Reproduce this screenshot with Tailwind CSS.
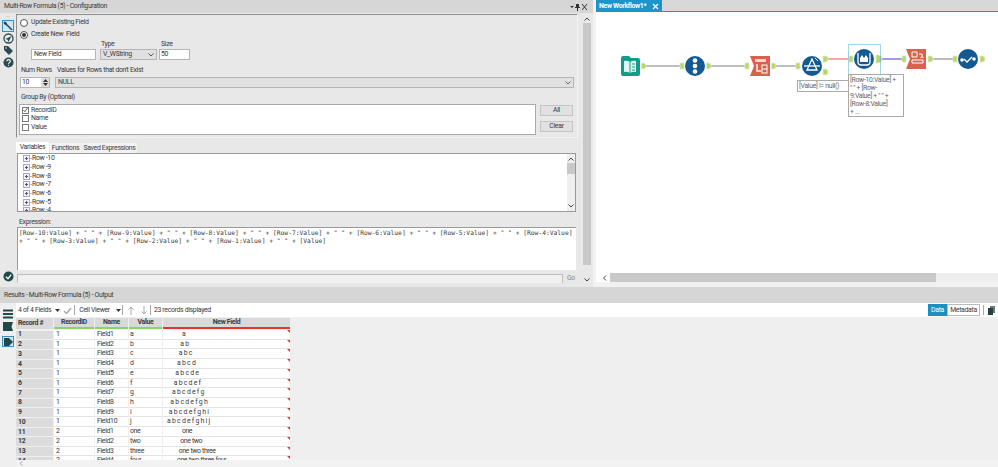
<!DOCTYPE html>
<html lang="en">
<head>
<meta charset="UTF-8" />
<title>Multi-Row Formula</title>
<script src="https://cdn.jsdelivr.net/npm/@tailwindcss/browser@4"></script>
</head>
<body class="bg-[#efefef] text-[#3a3a3a]">
<div class="w-[998px] h-[467px] overflow-hidden flex flex-col font-['Roboto',sans-serif] text-[6.900px] tracking-[-0.32px] leading-none whitespace-nowrap">

  <!-- top: config + canvas -->
  <div class="flex h-[287px] shrink-0">
    <div class="w-[593px] flex flex-col bg-[#e8e8e8]">
      <div class="h-[13px] bg-[#d6d6d6] flex items-center pl-[4px] pr-[4px]">
        <span class="flex-1">Multi-Row Formula (5) - Configuration</span>
        <svg width="18" height="8" viewBox="0 0 18 8" class="mr-[1px]"><path d="M0 3h4l-2 2z" fill="#333"/><path d="M6 1h3v3h1v1H8v3H7V5H5V4h1z" fill="#333"/><path d="M12 1l5 6M17 1l-5 6" stroke="#333" stroke-width="1"/></svg>
      </div>
      <div class="flex flex-1 min-h-0">
        <!-- tool strip -->
        <div class="w-[16px] flex flex-col items-center justify-between pb-[5px]">
          <div class="flex flex-col items-center">
            <div class="h-[7px] text-[5px] text-[#999] leading-[5px]">....</div>
            <div class="w-[12px] h-[12px] bg-[#cfe6f3] border border-[#3a8fc0] flex items-center justify-center">
              <svg width="10" height="10" viewBox="0 0 10 10"><path d="M1 1l2 .5 1 2L9 8.500 8.500 9 3.500 4 1.500 3z" fill="#22434f" stroke="#22434f"/></svg>
            </div>
            <svg class="mt-[1px]" width="11" height="11" viewBox="0 0 11 11"><circle cx="5.500" cy="5.500" r="4.500" fill="none" stroke="#2b4b52" stroke-width="1.300"/><path d="M2.500 6l6-3-3 6-.8-2.200z" fill="#2b4b52"/></svg>
            <svg class="mt-[1px]" width="11" height="11" viewBox="0 0 11 11"><path d="M1 1h4l5 5-4 4-5-5z" fill="#2b4b52"/><circle cx="3" cy="3" r=".8" fill="#e8e8e8"/></svg>
            <svg class="mt-[1px]" width="11" height="11" viewBox="0 0 11 11"><circle cx="5.500" cy="5.500" r="5" fill="#2b4b52"/><path d="M3.800 4.300c0-2.200 3.500-2.200 3.500 0 0 1.300-1.800 1.300-1.800 2.500M5.500 7.800v1" fill="none" stroke="#fff" stroke-width="1.100"/></svg>
          </div>
          <svg width="11" height="11" viewBox="0 0 11 11"><circle cx="5.500" cy="5.500" r="5" fill="#1f4a48"/><path d="M3 5.700l2 2 3.200-4" fill="none" stroke="#fff" stroke-width="1.300"/></svg>
        </div>

        <!-- form column -->
        <div class="w-[567px] flex flex-col">
          <div class="mt-[1px] h-[124px] w-[562px] box-border border-l border-t border-l-[#8e8e8e] border-t-[#8e8e8e] border-r border-b border-r-[#f2f2f2] border-b-[#f2f2f2] flex flex-col">
            <div class="mt-[2px] h-[11px] pl-[3px] flex items-center gap-[2px]"><span class="w-[8px] h-[8px] rounded-full border border-[#555] bg-white"></span><span class="ml-[1px]">Update Existing Field</span></div>
            <div class="mt-[1px] h-[11px] pl-[3px] flex items-center gap-[2px]"><span class="w-[8px] h-[8px] rounded-full border border-[#555] bg-white flex items-center justify-center"><span class="w-[4px] h-[4px] rounded-full bg-[#333]"></span></span><span class="ml-[1px]">Create New&nbsp; Field</span></div>
            <div class="h-[9px] flex items-center"><span class="ml-[84px] w-[60px]">Type</span><span>Size</span></div>
            <div class="flex h-[11px] ml-[14px]">
              <div class="w-[65px] bg-white border border-[#b5b5b5] pl-[2px] flex items-center">New Field</div>
              <div class="ml-[4px] w-[57px] bg-[#e0e0e0] border border-[#b5b5b5] pl-[2px] flex items-center justify-between pr-[2px]">V_WString<svg width="6" height="4" viewBox="0 0 6 4"><path d="M.5 .5L3 3l2.500-2.500" fill="none" stroke="#555"/></svg></div>
              <div class="ml-[2px] w-[31px] bg-white border border-[#b5b5b5] pl-[1px] flex items-center">50</div>
            </div>
            <div class="mt-[5px] h-[10px] flex items-center"><span class="ml-[4px] w-[36px]">Num Rows</span><span>Values for Rows that don't Exist</span></div>
            <div class="mt-[2px] h-[11px] flex">
              <div class="ml-[3px] w-[30px] bg-white border border-[#b5b5b5] pl-[1px] flex items-center justify-between">10<span class="w-[8px] h-full bg-[#ddd] flex flex-col items-center justify-center gap-[1px]"><svg width="5" height="3" viewBox="0 0 5 3"><path d="M0 3h5L2.500 0z" fill="#333"/></svg><svg width="5" height="3" viewBox="0 0 5 3"><path d="M0 0h5L2.500 3z" fill="#333"/></svg></span></div>
              <div class="ml-[5px] w-[519px] bg-[#e0e0e0] border border-[#b5b5b5] pl-[2px] pr-[2px] flex items-center justify-between">NULL<svg width="6" height="4" viewBox="0 0 6 4"><path d="M.5 .5L3 3l2.500-2.500" fill="none" stroke="#666"/></svg></div>
            </div>
            <div class="mt-[4px] h-[10px] pl-[4px] flex items-center">Group By (Optional)</div>
            <div class="mt-[2px] flex">
              <div class="ml-[2px] w-[517px] h-[31px] bg-white border border-[#a9a9a9] pl-[2px] pt-[1px] flex flex-col">
                <div class="h-[8.500px] flex items-center gap-[2px]"><span class="w-[7px] h-[7px] border border-[#777] flex items-center justify-center"><svg width="6" height="6" viewBox="0 0 6 6"><path d="M.5 3l1.700 2L5.500 .5" fill="none" stroke="#444"/></svg></span>RecordID</div>
                <div class="h-[8.500px] flex items-center gap-[2px]"><span class="w-[7px] h-[7px] border border-[#777]"></span>Name</div>
                <div class="h-[8.500px] flex items-center gap-[2px]"><span class="w-[7px] h-[7px] border border-[#777]"></span>Value</div>
              </div>
              <div class="ml-[4px] w-[33px] flex flex-col gap-[5px] pt-[1px]">
                <div class="h-[11px] bg-[#e1e1e1] border border-[#c4c4c4] flex items-center justify-center">All</div>
                <div class="h-[11px] bg-[#e1e1e1] border border-[#c4c4c4] flex items-center justify-center">Clear</div>
              </div>
            </div>
          </div>

          <div class="mt-[4px] h-[11px] flex items-end">
            <div class="h-[11px] w-[33px] bg-white flex items-center justify-center">Variables</div>
            <div class="ml-[1px] h-[10px] w-[31px] bg-[#f2f2f2] flex items-center justify-center">Functions</div>
            <div class="ml-[1px] h-[10px] w-[55px] bg-[#f2f2f2] flex items-center justify-center">Saved Expressions</div>
          </div>
          <div class="ml-[1px] w-[559px] h-[59px] bg-white border border-[#9a9a9a] flex overflow-hidden">
            <div class="flex-1 pl-[5px] pt-[.5px] overflow-hidden">
              <div class="h-[8.670px] flex items-center"><svg width="9" height="7" viewBox="0 0 9 7"><rect x=".5" y=".5" width="6" height="6" fill="#eef2f6" stroke="#aab"/><path d="M2 3.500h3M3.500 2v3" stroke="#557"/><path d="M7 3.500h2" stroke="#bbb"/></svg>Row -10</div>
              <div class="h-[8.670px] flex items-center"><svg width="9" height="7" viewBox="0 0 9 7"><rect x=".5" y=".5" width="6" height="6" fill="#eef2f6" stroke="#aab"/><path d="M2 3.500h3M3.500 2v3" stroke="#557"/><path d="M7 3.500h2" stroke="#bbb"/></svg>Row -9</div>
              <div class="h-[8.670px] flex items-center"><svg width="9" height="7" viewBox="0 0 9 7"><rect x=".5" y=".5" width="6" height="6" fill="#eef2f6" stroke="#aab"/><path d="M2 3.500h3M3.500 2v3" stroke="#557"/><path d="M7 3.500h2" stroke="#bbb"/></svg>Row -8</div>
              <div class="h-[8.670px] flex items-center"><svg width="9" height="7" viewBox="0 0 9 7"><rect x=".5" y=".5" width="6" height="6" fill="#eef2f6" stroke="#aab"/><path d="M2 3.500h3M3.500 2v3" stroke="#557"/><path d="M7 3.500h2" stroke="#bbb"/></svg>Row -7</div>
              <div class="h-[8.670px] flex items-center"><svg width="9" height="7" viewBox="0 0 9 7"><rect x=".5" y=".5" width="6" height="6" fill="#eef2f6" stroke="#aab"/><path d="M2 3.500h3M3.500 2v3" stroke="#557"/><path d="M7 3.500h2" stroke="#bbb"/></svg>Row -6</div>
              <div class="h-[8.670px] flex items-center"><svg width="9" height="7" viewBox="0 0 9 7"><rect x=".5" y=".5" width="6" height="6" fill="#eef2f6" stroke="#aab"/><path d="M2 3.500h3M3.500 2v3" stroke="#557"/><path d="M7 3.500h2" stroke="#bbb"/></svg>Row -5</div>
              <div class="h-[8.670px] flex items-center"><svg width="9" height="7" viewBox="0 0 9 7"><rect x=".5" y=".5" width="6" height="6" fill="#eef2f6" stroke="#aab"/><path d="M2 3.500h3M3.500 2v3" stroke="#557"/><path d="M7 3.500h2" stroke="#bbb"/></svg>Row -4</div>
            </div>
            <div class="w-[8px] bg-[#efefef] flex flex-col items-center">
              <svg class="mt-[3px] mb-[2px]" width="6" height="4" viewBox="0 0 6 4"><path d="M.5 3.500L3 1l2.500 2.500" fill="none" stroke="#444"/></svg>
              <div class="w-full h-[11px] bg-[#c8c8c8]"></div>
              <div class="flex-1"></div>
              <svg class="mb-[3px]" width="6" height="4" viewBox="0 0 6 4"><path d="M.5 .5L3 3l2.500-2.500" fill="none" stroke="#444"/></svg>
            </div>
          </div>
          <div class="mt-[5px] h-[10px] pl-[3px] flex items-center">Expression:</div>
          <div class="ml-[1px] w-[559px] h-[43px] bg-white border-t border-l border-[#9a9a9a] pl-[1px] pt-[1px] font-['DejaVu_Sans_Mono',monospace] text-[6.300px] tracking-normal leading-[8px] whitespace-pre">[Row-10:Value] + " " + [Row-9:Value] + " " + [Row-8:Value] + " " + [Row-7:Value] + " " + [Row-6:Value] + " " + [Row-5:Value] + " " + [Row-4:Value]
+ " " + [Row-3:Value] + " " + [Row-2:Value] + " " + [Row-1:Value] + " " + [Value]</div>
          <div class="mt-[4px] ml-[1px] flex h-[9px] items-center">
            <div class="w-[546px] h-full bg-[#f0f0f0] border-t border-l border-r border-[#bdbdbd]"></div>
            <span class="ml-[4px] text-[#888]">Go</span>
          </div>
        </div>

        <!-- config scrollbar -->
        <div class="w-[8px] flex flex-col items-center pb-[4px]">
          <svg class="mt-[4px] mb-[2px]" width="6" height="4" viewBox="0 0 6 4"><path d="M.5 3.500L3 1l2.500 2.500" fill="none" stroke="#444"/></svg>
          <div class="w-full h-[242px] bg-[#c8c8c8]"></div>
          <div class="flex-1"></div>
          <svg class="mb-[1px]" width="6" height="4" viewBox="0 0 6 4"><path d="M.5 .5L3 3l2.500-2.500" fill="none" stroke="#444"/></svg>
        </div>
      </div>
    </div>

    <div class="w-[3px] bg-[#f2f2f2]"></div>

    <!-- workflow canvas -->
    <div class="flex-1 flex flex-col bg-white">
      <div class="h-[12px] shrink-0 flex bg-[#d8d8d8] border-b border-[#1a96cd]">
        <div class="w-[66px] h-[12px] bg-[#1a96cd] text-white font-bold flex items-center justify-between pl-[3px] pr-[3px]">New Workflow1*<svg width="7" height="7" viewBox="0 0 7 7"><path d="M1 1l5 5M6 1l-5 5" stroke="#fff" stroke-width="1.200"/></svg></div>
      </div>
      <div class="relative flex-1">
        <svg class="absolute left-0 top-0" width="402" height="261" viewBox="596 12 402 261">
          <!-- connectors -->
          <path d="M645 66H681M710 66H746M775 66H797" stroke="#7f7f7f" stroke-width="1.200" fill="none"/>
          <path d="M827 59H848" stroke="#f06a6a" stroke-width="1.200"/>
          <path d="M880 59H902" stroke="#5a5ae0" stroke-width="1.200"/>
          <path d="M932 59H953" stroke="#8f8f8f" stroke-width="1.200"/>
          <!-- anchors -->
          <g fill="#b9d66e" stroke="#dfe9c0" stroke-width=".8">
            <path d="M641.500 63h1.500a3 3 0 010 6h-1.500z"/><rect x="680" y="63" width="4" height="6"/>
            <path d="M706.500 63h1.500a3 3 0 010 6h-1.500z"/><rect x="745" y="63" width="4" height="6"/>
            <path d="M771.500 63h1.500a3 3 0 010 6h-1.500z"/><rect x="796" y="63" width="4" height="6"/>
            <path d="M823 56h2a3 3 0 010 6h-2z"/><path d="M823 69h2a3 3 0 010 6h-2z"/>
            <rect x="849" y="56" width="4" height="6"/>
            <path d="M876 55h2a4 4 0 010 8h-2z"/><rect x="902" y="56" width="4" height="6"/>
            <path d="M928 56h2a3 3 0 010 6h-2z"/><rect x="953" y="56" width="4" height="6"/>
            <path d="M980 56h2a3 3 0 010 6h-2z"/>
          </g>
          <!-- input: book -->
          <path d="M621 58q0-2 2-2h6l2 2h7q2 0 2 2v14q0 2-2 2h-15q-2 0-2-2z" fill="#0f9d8a"/>
          <path d="M624 61q3-1 6 1q3-2 6-1v11q-3-1-6 1q-3-2-6-1z" fill="#e4f6f1"/>
          <path d="M630 62v11M632 64h3M632 67h3M632 70h3" stroke="#0f9d8a" stroke-width="1"/>
          <!-- record id -->
          <circle cx="695" cy="66" r="10" fill="#135a93"/>
          <circle cx="695" cy="60.500" r="2.300" fill="#fff"/><circle cx="695" cy="66" r="2.300" fill="#fff"/><circle cx="695" cy="71.500" r="2.300" fill="#fff"/>
          <!-- select -->
          <path d="M750 56h20v20h-20l4-10z" fill="#d9624c"/>
          <path d="M755 59h11v3h-11z" fill="#f7d9d2"/>
          <path d="M757 64v7h4" stroke="#fff" stroke-width="1.300" fill="none"/>
          <rect x="762" y="65" width="5" height="8" fill="none" stroke="#fff"/><path d="M762 69h5" stroke="#fff"/>
          <!-- filter -->
          <circle cx="812" cy="66" r="10" fill="#135a93"/>
          <path d="M812 59l5 11h-10z" fill="none" stroke="#fff" stroke-width="1.300"/><path d="M804 66h16" stroke="#fff" stroke-width="1.300"/><path d="M815 58l3 3" stroke="#fff"/>
          <!-- multi row formula -->
          <circle cx="864" cy="59" r="10" fill="#135a93"/>
          <path d="M858 53v9q0 3 3 3h6q3 0 3-3v-9" fill="none" stroke="#fff" stroke-width="1.300"/>
          <path d="M860 58l2-3 2 3 2-3 2 3v4h-8z" fill="#fff"/>
          <!-- selection frame -->
          <rect x="848.500" y="44.500" width="32" height="30" fill="none" stroke="#4aa8dc" stroke-width="1" stroke-dasharray="1 1"/>
          <!-- sort -->
          <path d="M906 49h20v20h-20l4-10z" fill="#d9624c"/>
          <path d="M912 52h5v5h-5zM912 60h11v3h-11z" fill="none" stroke="#fff"/>
          <path d="M919 54h3v4M920.500 58l1.500-1.500 1.500 1.500" stroke="#fff" fill="none"/>
          <!-- check -->
          <circle cx="968" cy="59" r="10" fill="#135a93"/>
          <circle cx="962" cy="60" r="1.800" fill="#fff"/><circle cx="974" cy="59" r="1.800" fill="#fff"/>
          <path d="M964 59l3 3 5-5" stroke="#fff" stroke-width="1.300" fill="none"/>
        </svg>
        <div class="absolute left-[201px] top-[68px] w-[52px] h-[12px] bg-white border border-[#aaa] pl-[1px] flex items-center text-[#666]">[Value] != null()</div>
        <div class="absolute left-[252px] top-[62px] w-[56px] h-[43px] bg-white border border-[#aaa] pl-[1px] pt-[1px] leading-[8px] text-[#666] whitespace-pre">[Row-10:Value] +
" " + [Row-
9:Value] + " " +
[Row-8:Value]
+ ...</div>
      </div>
      <div class="h-[9px] shrink-0 flex items-center">
        <svg class="ml-[6px] mr-[3px]" width="5" height="6" viewBox="0 0 5 6"><path d="M4 .5L1.500 3 4 5.500" fill="none" stroke="#444"/></svg>
        <div class="w-[326px] h-full bg-[#c9c9c9]"></div>
        <div class="flex-1 h-full bg-[#eeeeee]"></div>
      </div>
      <div class="h-[5px] shrink-0 bg-[#f2f2f2]"></div>
    </div>
  </div>

  <!-- results -->
  <div class="h-[16px] shrink-0 bg-[#d6d6d6] flex items-center pl-[4px]">Results - Multi-Row Formula (5) - Output</div>
  <div class="flex-1 flex min-h-0">
    <div class="w-[16px] flex flex-col items-center pt-[6px]">
      <svg width="10" height="10" viewBox="0 0 10 10"><path d="M0 1.500h10M0 5h10M0 8.500h10" stroke="#1f4a48" stroke-width="2"/></svg>
      <svg class="mt-[3px]" width="10" height="9" viewBox="0 0 10 9"><path d="M0 0h10l-1.500 4.500L10 9H0z" fill="#1f4a48"/></svg>
      <div class="mt-[5px] w-[12px] h-[11px] bg-[#cfe6f3] border border-[#3a8fc0] flex items-center justify-center"><svg width="9" height="8" viewBox="0 0 9 8"><path d="M0 0h5l4 4-4 4H0z" fill="#1f4a48"/></svg></div>
    </div>
    <div class="flex-1 flex flex-col min-w-0">
      <div class="h-[14px] shrink-0 bg-white flex items-center pl-[2px]">
        <span>4 of 4 Fields</span>
        <svg class="ml-[4px]" width="5" height="3" viewBox="0 0 5 3"><path d="M0 0h5L2.500 3z" fill="#333"/></svg>
        <svg class="ml-[3px]" width="9" height="7" viewBox="0 0 9 7"><path d="M1 4l2.500 2.500L8 1" fill="none" stroke="#aaa" stroke-width="1.500"/></svg>
        <span class="ml-[2px] w-px h-[10px] bg-[#aaa]"></span>
        <span class="ml-[4px]">Cell Viewer</span>
        <svg class="ml-[6px]" width="5" height="3" viewBox="0 0 5 3"><path d="M0 0h5L2.500 3z" fill="#333"/></svg>
        <span class="ml-[1px] w-px h-[10px] bg-[#aaa]"></span>
        <svg class="ml-[5px]" width="6" height="9" viewBox="0 0 6 9"><path d="M3 9V1M.5 3.500L3 1l2.500 2.500" fill="none" stroke="#aaa"/></svg>
        <svg class="ml-[7px]" width="6" height="9" viewBox="0 0 6 9"><path d="M3 0v8M.5 5.500L3 8l2.500-2.500" fill="none" stroke="#aaa"/></svg>
        <span class="ml-[3px] w-px h-[10px] bg-[#aaa]"></span>
        <span class="ml-[3px]">23 records displayed</span>
        <div class="ml-auto flex items-center h-full pr-[3px]">
          <div class="w-[19px] h-[12px] bg-[#1a8fc4] text-white flex items-center justify-center">Data</div>
          <div class="w-[33px] h-[12px] border border-[#bbb] flex items-center justify-center">Metadata</div>
          <span class="ml-[3px] w-px h-[10px] bg-[#aaa]"></span>
          <svg class="ml-[4px]" width="7" height="9" viewBox="0 0 7 9"><path d="M2 0h5v7H2z" fill="#6b7b7b"/><path d="M0 2h5v7H0z" fill="#24403f"/></svg>
        </div>
      </div>
      <div class="flex-1 min-h-0 overflow-hidden">
        <div class="mt-[1px] mb-[1px] flex h-[11px] font-bold">
          <div class="w-[37px] bg-[#d9d9d9] pl-[2px] flex items-center">Record #</div>
          <div class="ml-[1px] w-[40px] bg-[#d9d9d9] border-b-2 border-[#8bd26b] flex items-center justify-center">RecordID</div>
          <div class="ml-[1px] w-[33px] bg-[#d9d9d9] border-b-2 border-[#8bd26b] flex items-center justify-center">Name</div>
          <div class="ml-[1px] w-[33px] bg-[#d9d9d9] border-b-2 border-[#8bd26b] flex items-center justify-center">Value</div>
          <div class="ml-[1px] w-[127px] bg-[#d9d9d9] border-b-2 border-[#e8322d] flex items-center justify-center">New Field</div>
        </div>
        <div id="rows"></div>
      </div>
      <div class="h-[7px] shrink-0 flex items-center pl-[3px] bg-[#f2f2f2]"><svg width="4" height="5" viewBox="0 0 4 5"><path d="M3.500 .5L1 2.500l2.500 2" fill="none" stroke="#aaa"/></svg></div>
    </div>
  </div>
</div>
<script>
  const rows = [
    ['1', '1', 'Field1', 'a', '         a'],
    ['2', '1', 'Field2', 'b', '        a b'],
    ['3', '1', 'Field3', 'c', '       a b c'],
    ['4', '1', 'Field4', 'd', '      a b c d'],
    ['5', '1', 'Field5', 'e', '     a b c d e'],
    ['6', '1', 'Field6', 'f', '    a b c d e f'],
    ['7', '1', 'Field7', 'g', '   a b c d e f g'],
    ['8', '1', 'Field8', 'h', '  a b c d e f g h'],
    ['9', '1', 'Field9', 'i', ' a b c d e f g h i'],
    ['10', '1', 'Field10', 'j', 'a b c d e f g h i j'],
    ['11', '2', 'Field1', 'one', '         one'],
    ['12', '2', 'Field2', 'two', '        one two'],
    ['13', '2', 'Field3', 'three', '       one two three'],
    ['14', '2', 'Field4', 'four', '      one two three four']
  ];
  document.getElementById('rows').innerHTML = rows.map(r => `
    <div class="flex h-[9.730px]">
      <div class="w-[37px] h-[8.730px] mt-[.5px] bg-[#dcdcdc] pl-[2px] font-bold flex items-center">${r[0]}</div>
      <div class="ml-[1px] w-[40px] bg-white border-b border-[#e4e4e4] pl-[2px] flex items-center">${r[1]}</div>
      <div class="ml-[1px] w-[33px] bg-white border-b border-[#e4e4e4] pl-[2px] flex items-center">${r[2]}</div>
      <div class="ml-[1px] w-[33px] bg-white border-b border-[#e4e4e4] pl-[1px] flex items-center">${r[3]}</div>
      <div class="ml-[1px] w-[127px] relative bg-white border-b border-[#e4e4e4] pl-[4px] tracking-[-0.45px] [word-spacing:0.41px] flex items-center whitespace-pre">${r[4]}<span class="absolute right-0 top-0 w-0 h-0 border-l-[3px] border-l-transparent border-t-[3px] border-t-[#e8322d]"></span></div>
    </div>`).join('');
</script>
</body>
</html>
